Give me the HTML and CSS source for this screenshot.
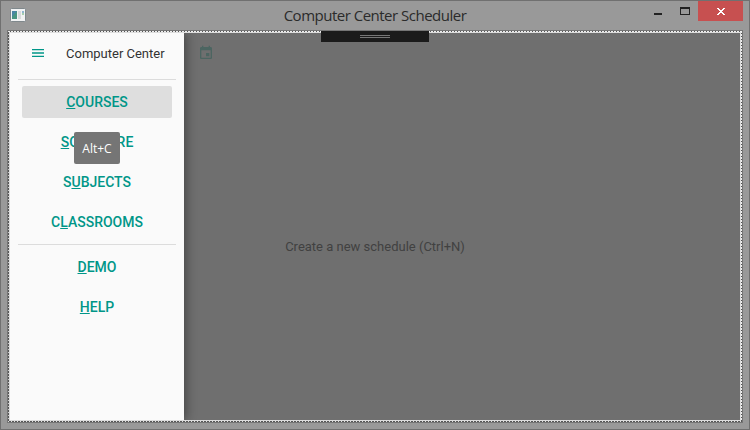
FILE: index.html
```html
<!DOCTYPE html>
<html lang="en">
<head>
<meta charset="utf-8">
<title>Computer Center Scheduler</title>
<link rel="stylesheet" href="styles.css">
</head>
<body>
<div class="window">
  <header class="titlebar">
    <svg class="app-icon" width="16" height="14" viewBox="0 0 16 14"><rect x=".5" y=".5" width="15" height="13" rx="1" fill="#f1f2f3" stroke="#7f888c"/><rect x="2" y="3" width="5" height="8" fill="#4a9582"/><path d="M2 3h5L2 9z" fill="#4b86a5"/><rect x="8" y="3" width="3" height="8" fill="#d8dadb"/><rect x="12" y="3" width="2" height="2" fill="#8fb5d0"/><rect x="12" y="5" width="2" height="2" fill="#a5cfae"/></svg>
    <h1 class="title">Computer Center Scheduler</h1>
    <div class="controls">
      <svg width="78" height="20" viewBox="0 0 78 20" shape-rendering="crispEdges"><path d="M34 12h8v2h-8z" fill="#222"/><path d="M60 6h10v8H60zM61 8v5h8V8z" fill="#222" fill-rule="evenodd"/></svg>
      <div class="close"><svg width="8" height="7" viewBox="0 0 8 7" shape-rendering="crispEdges"><path d="M0 0h2v1h1v1h2V1h1V0h2v1H7v1H6v1H5v1h1v1h1v1h1v1H6V6H5V5H3v1H2v1H0V6h1V5h1V4h1V3H2V2H1V1H0z" fill="#fff"/></svg></div>
    </div>
  </header>
  <div class="frame">
    <div class="dots"></div>
    <div class="client">
      <nav class="drawer">
        <div class="drawer-head">
          <svg width="12" height="8" viewBox="0 0 12 8"><path d="M0 0h12v1.333H0zM0 3.333h12v1.334H0zM0 6.667h12V8H0z" fill="#009688"/></svg>
          <span>Computer Center</span>
        </div>
        <hr>
        <a class="item selected"><span><u>C</u>OURSES</span></a>
        <a class="item"><span><u>S</u>OFTWARE</span></a>
        <a class="item"><span>S<u>U</u>BJECTS</span></a>
        <a class="item"><span>C<u>L</u>ASSROOMS</span></a>
        <hr class="second">
        <a class="item"><span><u>D</u>EMO</span></a>
        <a class="item"><span><u>H</u>ELP</span></a>
        <div class="tooltip">Alt+C</div>
      </nav>
      <main class="main">
        <svg class="calendar" width="16" height="16" viewBox="0 0 24 24" fill="#4c6561"><path d="M17 12h-5v5h5v-5zM16 1v2H8V1H6v2H5c-1.100 0-2 .9-2 2v14c0 1.100.9 2 2 2h14c1.100 0 2-.9 2-2V5c0-1.100-.9-2-2-2h-1V1h-2zm3 18H5V8h14v11z"/></svg>
      </main>
      <p class="hint">Create a new schedule (Ctrl+N)</p>
      <div class="grip"><i></i></div>
    </div>
  </div>
</div>
</body>
</html>
```
FILE: styles.css
```css
* { box-sizing: border-box; }
body { margin: 0; font-family: Roboto, sans-serif; }
.window { width: 750px; height: 430px; border: 1px solid #707070; background: #999; padding: 0 6px 6px; display: flex; flex-direction: column; }
.titlebar { height: 29px; flex: none; display: grid; grid-template-columns: 123px 1fr 123px; }
.app-icon { margin: 7px 0 0 3px; }
.title { margin: 0; text-align: center; font: 400 15px/29px "Open Sans", sans-serif; letter-spacing: -.5px; color: #2b2b2b; white-space: nowrap; }
.controls { display: flex; justify-content: flex-end; height: 20px; }
.close { width: 45px; height: 20px; padding-top: 1px; background: #c75050; display: flex; align-items: center; justify-content: center; }
.frame { position: relative; flex: none; height: 393px; border: 1px solid #757575; padding: 1px; background: #555; }
.dots { position: absolute; inset: 0; background:
  repeating-linear-gradient(90deg, #eee 0 2px, #555 2px 3px) 0 0/100% 1px no-repeat,
  repeating-linear-gradient(90deg, #ddd 0 1px, #555 1px 3px) 0 100%/100% 1px no-repeat,
  repeating-linear-gradient(#ccc 0 1px, #555 1px 3px) 0 0/1px 100% no-repeat,
  repeating-linear-gradient(#eee 0 2px, #555 2px 3px) 100% 0/1px 100% no-repeat; }
.client { position: relative; height: 389px; border: 1px solid #ddd; background: #6f6f6f; display: flex; }
.drawer { position: relative; z-index: 1; width: 174px; padding: 0 8px; background: #fafafa; box-shadow: 2px 0 10px rgba(0,0,0,.4); clip-path: inset(0 -16px 0 0); }
.drawer-head { height: 46px; padding: 0 0 6px 14px; display: flex; align-items: center; gap: 22px; font-size: 13px; color: #333; white-space: nowrap; }
.drawer-head svg { position: relative; }
hr { height: 1px; border: 0; margin: 0 0 6px; background: #dcdcdc; }
.item { display: flex; height: 32px; margin: 0 4px 8px; align-items: center; justify-content: center; border-radius: 2px; font-size: 14px; font-weight: 500; color: #009688; }
.item u { text-underline-offset: 1px; text-decoration-thickness: 1px; text-decoration-skip-ink: none; }
.selected { background: #dedede; }
hr.second { margin-top: -2px; }
.tooltip { position: absolute; left: 64px; top: 99px; width: 46px; height: 32px; border-radius: 2px; background: #757575; color: #fff; font: 12px/33px "Open Sans", sans-serif; text-align: center; }
.main { flex: 1; padding: 12px 14px; }
.hint { position: absolute; left: 0; right: 0; top: 206px; margin: 0; text-align: center; font-size: 13px; line-height: 16px; color: #414141; }
.grip { position: absolute; z-index: 2; left: 311px; top: -2px; width: 108px; height: 11px; background: #1b1b1b; display: flex; justify-content: center; }
.grip i { width: 30px; height: 3px; margin-top: 4px; border: solid #777; border-width: 1px 0; }
```
